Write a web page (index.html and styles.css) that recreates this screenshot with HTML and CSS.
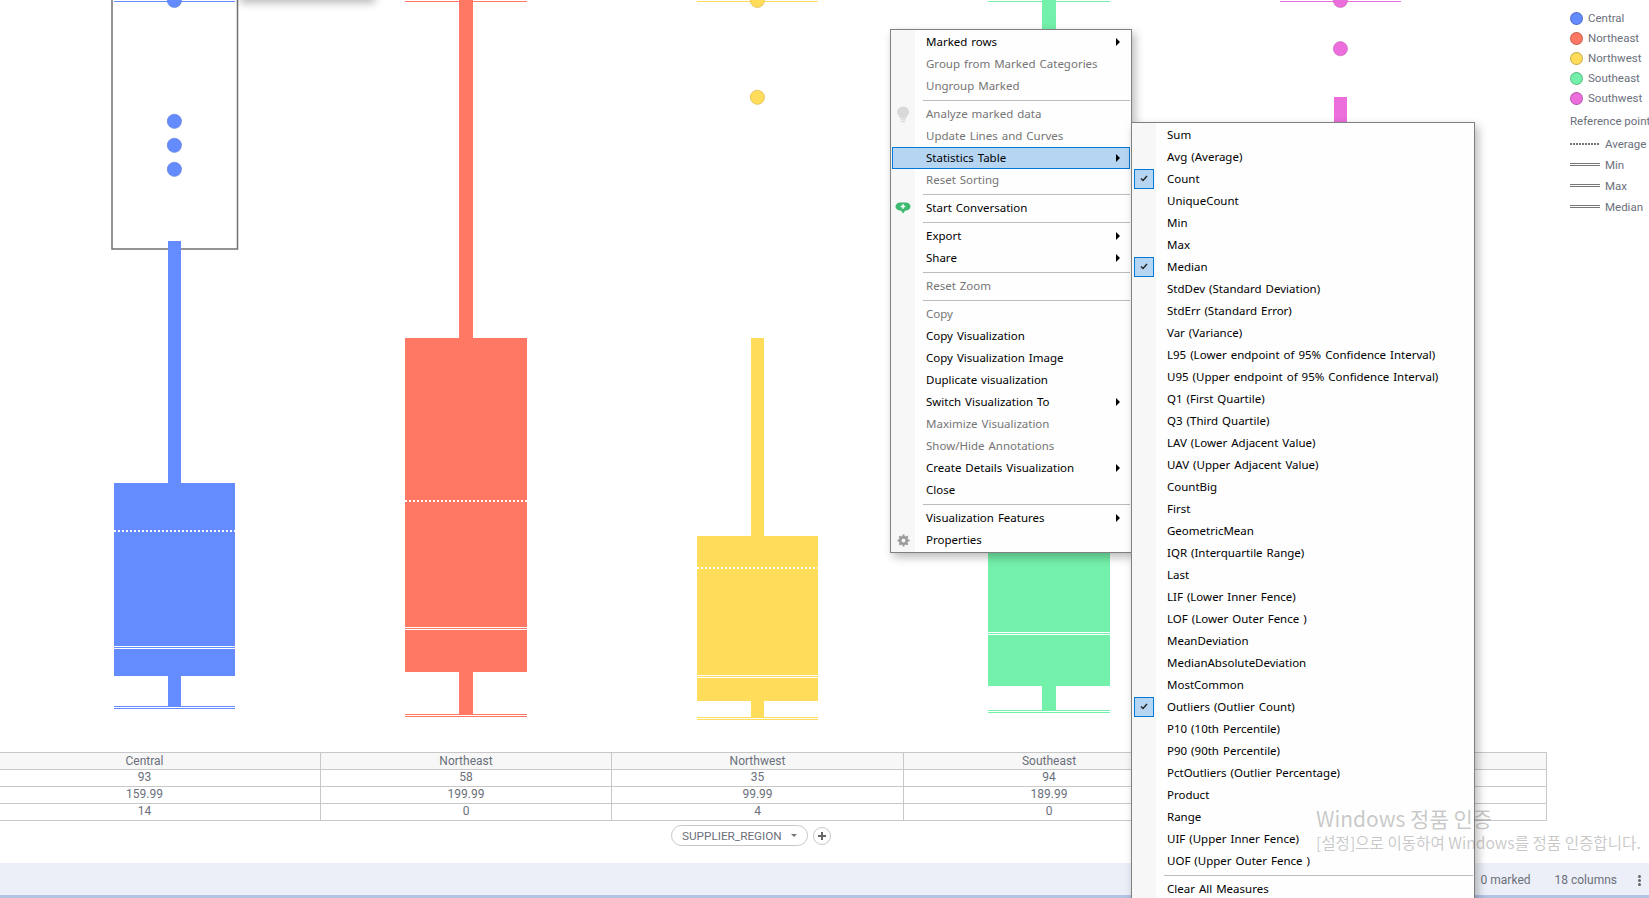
FILE: index.html
```html
<!DOCTYPE html>
<html lang="en">
<head>
<meta charset="utf-8">
<title>Box plot</title>
<link rel="stylesheet" href="styles.css">
</head>
<body>
<div class="page">
  <div class="top-shadow"></div>
  <div class="top">
    <svg class="chart" width="1570" height="752" viewBox="0 0 1570 752">
      <rect class="sel" x="112" y="-6" width="125.5" height="255"/>
      <g class="blue">
        <rect x="114" y="1" width="121" height="1"/>
        <circle cx="174.4" cy="0.4" r="7.1"/>
        <circle cx="174.4" cy="121.3" r="7.1"/>
        <circle cx="174.4" cy="145.3" r="7.1"/>
        <circle cx="174.4" cy="169.3" r="7.1"/>
        <rect x="168" y="241" width="13" height="242"/>
        <rect x="114" y="483" width="121" height="193"/>
        <rect x="168" y="676" width="13" height="30"/>
        <rect x="114" y="706" width="121" height="1"/>
        <rect x="114" y="708" width="121" height="1"/>
        <line class="avg" x1="114" y1="531" x2="235" y2="531"/>
        <rect class="med" x="114" y="646" width="121" height="1"/>
        <rect class="med" x="114" y="648" width="121" height="1"/>
      </g>
      <g class="red">
        <rect x="405" y="1" width="122" height="1"/>
        <rect x="459" y="0" width="14" height="338"/>
        <rect x="405" y="338" width="122" height="334"/>
        <rect x="459" y="672" width="14" height="42"/>
        <rect x="405" y="714" width="122" height="1"/>
        <rect x="405" y="716" width="122" height="1"/>
        <line class="avg" x1="405" y1="501" x2="527" y2="501"/>
        <rect class="med" x="405" y="627" width="122" height="1"/>
        <rect class="med" x="405" y="629" width="122" height="1"/>
      </g>
      <g class="yellow">
        <rect x="697" y="1" width="121" height="1"/>
        <circle cx="757.4" cy="0.4" r="7.1"/>
        <circle cx="757.4" cy="97.3" r="7.1"/>
        <rect x="751" y="338" width="13" height="198"/>
        <rect x="697" y="536" width="121" height="165"/>
        <rect x="751" y="701" width="13" height="16"/>
        <rect x="697" y="717" width="121" height="1"/>
        <rect x="697" y="719" width="121" height="1"/>
        <line class="avg" x1="697" y1="568" x2="818" y2="568"/>
        <rect class="med" x="697" y="675" width="121" height="1"/>
        <rect class="med" x="697" y="677" width="121" height="1"/>
      </g>
      <g class="green">
        <rect x="988" y="1" width="122" height="1"/>
        <rect x="1042" y="0" width="14" height="400"/>
        <rect x="988" y="400" width="122" height="286"/>
        <rect x="1042" y="686" width="14" height="24"/>
        <rect x="988" y="710" width="122" height="1"/>
        <rect x="988" y="712" width="122" height="1"/>
        <rect class="med" x="988" y="632" width="122" height="1"/>
        <rect class="med" x="988" y="634" width="122" height="1"/>
      </g>
      <g class="pink">
        <rect x="1280" y="1" width="121" height="1"/>
        <circle cx="1340.4" cy="0.4" r="7.1"/>
        <circle cx="1340.4" cy="48.7" r="7.1"/>
        <rect x="1334" y="97" width="13" height="60"/>
      </g>
    </svg>
    <div class="legend">
      <div class="lg-row"><span class="swatch s-blue"></span>Central</div>
      <div class="lg-row"><span class="swatch s-red"></span>Northeast</div>
      <div class="lg-row"><span class="swatch s-yellow"></span>Northwest</div>
      <div class="lg-row"><span class="swatch s-green"></span>Southeast</div>
      <div class="lg-row"><span class="swatch s-pink"></span>Southwest</div>
      <div class="lg-title">Reference points</div>
      <div class="lg-ref"><span class="dotted"></span>Average</div>
      <div class="lg-ref"><span class="double"></span>Min</div>
      <div class="lg-ref"><span class="double"></span>Max</div>
      <div class="lg-ref"><span class="double"></span>Median</div>
    </div>
  </div>

  <div class="stats">
    <div class="cell head first">Central</div><div class="cell head">Northeast</div><div class="cell head">Northwest</div><div class="cell head">Southeast</div><div class="cell head">Southwest</div>
    <div class="cell first">93</div><div class="cell">58</div><div class="cell">35</div><div class="cell">94</div><div class="cell">70</div>
    <div class="cell first">159.99</div><div class="cell">199.99</div><div class="cell">99.99</div><div class="cell">189.99</div><div class="cell">149.99</div>
    <div class="cell first">14</div><div class="cell">0</div><div class="cell">4</div><div class="cell">0</div><div class="cell">3</div>
  </div>

  <div class="axis">
    <div class="pill">SUPPLIER_REGION<span class="caret"></span></div>
    <div class="add"><svg width="10" height="10" viewBox="0 0 10 10"><path class="plus" d="M5 1v8M1 5h8"/></svg></div>
  </div>

  <div class="status">
    <span>0 marked</span>
    <span>18 columns</span>
    <span class="dots"><i></i><i></i><i></i></span>
  </div>

  <div class="menu menu-main">
    <div class="item"><span class="ic"></span><span class="label">Marked rows</span><span class="arrow"></span></div>
    <div class="item off"><span class="ic"></span><span class="label">Group from Marked Categories</span></div>
    <div class="item off"><span class="ic"></span><span class="label">Ungroup Marked</span></div>
    <div class="sep"></div>
    <div class="item off"><span class="ic"><svg width="14" height="17" viewBox="0 0 14 17"><path class="bulb" d="M7 0.5C3.6 0.5 1 3 1 6c0 2.2 1.4 3.5 2.4 4.8.5.7.6 1.2.6 1.7h6c0-.5.1-1 .6-1.7C11.600 9.500 13 8.200 13 6c0-3-2.600-5.500-6-5.500z"/><path class="bulb-base" d="M4.500 13.800h5M5 15.800h4"/></svg></span><span class="label">Analyze marked data</span></div>
    <div class="item off"><span class="ic"></span><span class="label">Update Lines and Curves</span></div>
    <div class="item hot"><span class="ic"></span><span class="label">Statistics Table</span><span class="arrow"></span></div>
    <div class="item off"><span class="ic"></span><span class="label">Reset Sorting</span></div>
    <div class="sep"></div>
    <div class="item"><span class="ic"><svg width="16" height="12" viewBox="0 0 16 12"><path class="chat" d="M5 0.500h6c2.500 0 4.500 1.800 4.500 4s-2 4-4.500 4h-.6L8 11.500 6 8.500H5C2.500 8.500.5 6.700.5 4.500S2.500.5 5 .5z"/><path class="chat-plus" d="M8 2.200v4.600M5.700 4.500h4.600"/></svg></span><span class="label">Start Conversation</span></div>
    <div class="sep"></div>
    <div class="item"><span class="ic"></span><span class="label">Export</span><span class="arrow"></span></div>
    <div class="item"><span class="ic"></span><span class="label">Share</span><span class="arrow"></span></div>
    <div class="sep"></div>
    <div class="item off"><span class="ic"></span><span class="label">Reset Zoom</span></div>
    <div class="sep"></div>
    <div class="item off"><span class="ic"></span><span class="label">Copy</span></div>
    <div class="item"><span class="ic"></span><span class="label">Copy Visualization</span></div>
    <div class="item"><span class="ic"></span><span class="label">Copy Visualization Image</span></div>
    <div class="item"><span class="ic"></span><span class="label">Duplicate visualization</span></div>
    <div class="item"><span class="ic"></span><span class="label">Switch Visualization To</span><span class="arrow"></span></div>
    <div class="item off"><span class="ic"></span><span class="label">Maximize Visualization</span></div>
    <div class="item off"><span class="ic"></span><span class="label">Show/Hide Annotations</span></div>
    <div class="item"><span class="ic"></span><span class="label">Create Details Visualization</span><span class="arrow"></span></div>
    <div class="item"><span class="ic"></span><span class="label">Close</span></div>
    <div class="sep"></div>
    <div class="item"><span class="ic"></span><span class="label">Visualization Features</span><span class="arrow"></span></div>
    <div class="item"><span class="ic"><svg width="13" height="13" viewBox="0 0 13 13"><circle class="gear-ring" cx="6.500" cy="6.500" r="3.300"/><path class="gear-teeth" d="M6.500 0.500v2.200M6.500 10.300v2.200M.5 6.500h2.200M10.300 6.500h2.200M2.300 2.300l1.500 1.500M9.200 9.200l1.500 1.500M10.700 2.300L9.200 3.800M3.800 9.200l-1.500 1.500"/></svg></span><span class="label">Properties</span></div>
  </div>

  <div class="menu menu-sub">
    <div class="item"><span class="ic"></span><span class="label">Sum</span></div>
    <div class="item"><span class="ic"></span><span class="label">Avg (Average)</span></div>
    <div class="item"><span class="ic"><span class="check"><svg width="8" height="7" viewBox="0 0 8 7"><path class="tick" d="M1 3.500L3 5.500 7 1"/></svg></span></span><span class="label">Count</span></div>
    <div class="item"><span class="ic"></span><span class="label">UniqueCount</span></div>
    <div class="item"><span class="ic"></span><span class="label">Min</span></div>
    <div class="item"><span class="ic"></span><span class="label">Max</span></div>
    <div class="item"><span class="ic"><span class="check"><svg width="8" height="7" viewBox="0 0 8 7"><path class="tick" d="M1 3.500L3 5.500 7 1"/></svg></span></span><span class="label">Median</span></div>
    <div class="item"><span class="ic"></span><span class="label">StdDev (Standard Deviation)</span></div>
    <div class="item"><span class="ic"></span><span class="label">StdErr (Standard Error)</span></div>
    <div class="item"><span class="ic"></span><span class="label">Var (Variance)</span></div>
    <div class="item"><span class="ic"></span><span class="label">L95 (Lower endpoint of 95% Confidence Interval)</span></div>
    <div class="item"><span class="ic"></span><span class="label">U95 (Upper endpoint of 95% Confidence Interval)</span></div>
    <div class="item"><span class="ic"></span><span class="label">Q1 (First Quartile)</span></div>
    <div class="item"><span class="ic"></span><span class="label">Q3 (Third Quartile)</span></div>
    <div class="item"><span class="ic"></span><span class="label">LAV (Lower Adjacent Value)</span></div>
    <div class="item"><span class="ic"></span><span class="label">UAV (Upper Adjacent Value)</span></div>
    <div class="item"><span class="ic"></span><span class="label">CountBig</span></div>
    <div class="item"><span class="ic"></span><span class="label">First</span></div>
    <div class="item"><span class="ic"></span><span class="label">GeometricMean</span></div>
    <div class="item"><span class="ic"></span><span class="label">IQR (Interquartile Range)</span></div>
    <div class="item"><span class="ic"></span><span class="label">Last</span></div>
    <div class="item"><span class="ic"></span><span class="label">LIF (Lower Inner Fence)</span></div>
    <div class="item"><span class="ic"></span><span class="label">LOF (Lower Outer Fence )</span></div>
    <div class="item"><span class="ic"></span><span class="label">MeanDeviation</span></div>
    <div class="item"><span class="ic"></span><span class="label">MedianAbsoluteDeviation</span></div>
    <div class="item"><span class="ic"></span><span class="label">MostCommon</span></div>
    <div class="item"><span class="ic"><span class="check"><svg width="8" height="7" viewBox="0 0 8 7"><path class="tick" d="M1 3.500L3 5.500 7 1"/></svg></span></span><span class="label">Outliers (Outlier Count)</span></div>
    <div class="item"><span class="ic"></span><span class="label">P10 (10th Percentile)</span></div>
    <div class="item"><span class="ic"></span><span class="label">P90 (90th Percentile)</span></div>
    <div class="item"><span class="ic"></span><span class="label">PctOutliers (Outlier Percentage)</span></div>
    <div class="item"><span class="ic"></span><span class="label">Product</span></div>
    <div class="item"><span class="ic"></span><span class="label">Range</span></div>
    <div class="item"><span class="ic"></span><span class="label">UIF (Upper Inner Fence)</span></div>
    <div class="item"><span class="ic"></span><span class="label">UOF (Upper Outer Fence )</span></div>
    <div class="sep"></div>
    <div class="item"><span class="ic"></span><span class="label">Clear All Measures</span></div>
  </div>

  <div class="watermark">
    <div class="wm-title">Windows 정품 인증</div>
    <div class="wm-sub">[설정]으로 이동하여 Windows를 정품 인증합니다.</div>
  </div>
</div>
</body>
</html>
```

FILE: styles.css
```css
* { box-sizing: border-box; }
html, body { margin: 0; padding: 0; background: #fff; }
.page {
  position: relative;
  width: 1649px;
  height: 898px;
  overflow: hidden;
  background: #fff;
  font-family: Roboto, "Noto Sans CJK KR", sans-serif;
  font-size: 12px;
  color: #6b6f7b;
  white-space: nowrap;
}
.top-shadow {
  position: absolute;
  left: 240px;
  top: -20px;
  width: 135px;
  height: 20px;
  box-shadow: 0 3px 9px rgba(0, 0, 0, .28);
}

/* chart */
.top { display: flex; height: 752px; }
.chart { display: block; flex: none; }
.sel { fill: none; stroke: #707070; stroke-width: 1.500; }
.blue rect, .blue circle { fill: #648cff; }
.red rect { fill: #ff7864; }
.yellow rect, .yellow circle { fill: #ffdc5a; }
.green rect { fill: #73f0aa; }
.pink rect, .pink circle { fill: #eb6edc; }
.blue circle { stroke: #5a78d2; stroke-width: .6; }
.yellow circle { stroke: #d2b44b; stroke-width: .6; }
.pink circle { stroke: #c45fb8; stroke-width: .6; }
.chart .med { fill: #fff; }
.avg { stroke: #fff; stroke-width: 2; stroke-dasharray: 2 2; }

/* legend */
.legend { width: 79px; flex: none; overflow: hidden; padding-top: 8px; font-size: 11.5px; }
.lg-row { display: flex; align-items: center; gap: 5px; height: 20px; }
.swatch { width: 13px; height: 13px; border-radius: 50%; border: 1px solid rgba(0, 0, 0, .22); }
.s-blue { background: #648cff; }
.s-red { background: #ff7864; }
.s-yellow { background: #ffdc5a; }
.s-green { background: #73f0aa; }
.s-pink { background: #eb6edc; }
.lg-title { height: 20px; line-height: 20px; margin: 3px 0 2px; }
.lg-ref { display: flex; align-items: center; gap: 5px; height: 21px; }
.dotted { width: 30px; height: 2px; background: repeating-linear-gradient(90deg, #777 0 2px, transparent 2px 3px); }
.double { width: 30px; height: 3px; border-top: 1px solid #777; border-bottom: 1px solid #777; }

/* statistics table */
.stats {
  display: grid;
  grid-template-columns: 321px 291px 292px 291px 352px;
  grid-auto-rows: 17px;
  width: 1547px;
  height: 69px;
  border-top: 1px solid #c8c8c8;
}
.cell {
  display: flex;
  align-items: center;
  justify-content: center;
  padding-bottom: 2px;
  border-bottom: 1px solid #c8c8c8;
  border-right: 1px solid #c8c8c8;
}
.head { background: #f7f7f7; padding-bottom: 0; }
.first { padding-right: 31px; }

/* axis selector */
.axis { display: flex; align-items: flex-start; gap: 5px; height: 42px; padding: 4px 0 0 671px; }
.pill {
  display: flex;
  align-items: center;
  width: 137px;
  height: 21px;
  padding-left: 10px;
  border: 1px solid #c8c8c8;
  border-radius: 11px;
  font-size: 11.75px;
}
.caret {
  margin-left: 9px;
  border-left: 3.500px solid transparent;
  border-right: 3.500px solid transparent;
  border-top: 3.500px solid #777;
}
.add {
  display: flex;
  align-items: center;
  justify-content: center;
  width: 18px;
  height: 18px;
  margin-top: 2px;
  border: 1px solid #c8c8c8;
  border-radius: 50%;
}
.plus { fill: none; stroke: #666; stroke-width: 2; }

/* status bar */
.status {
  display: flex;
  align-items: center;
  justify-content: flex-end;
  gap: 24px;
  height: 35px;
  padding: 2px 8px 0 0;
  background: #eceff7;
  border-bottom: 3px solid #b3c4e3;
}
.dots { display: flex; flex-direction: column; gap: 1px; margin-left: -3px; }
.dots i { display: block; width: 3px; height: 3px; border-radius: 50%; background: #666; }

/* context menus */
.menu {
  position: absolute;
  padding: 1px 0;
  background: linear-gradient(to right, #f7f7f7 24px, #fefefe 24px);
  border: 1px solid #808080;
  box-shadow: 3px 4px 9px rgba(0, 0, 0, .28);
  font-family: "Noto Sans", "Noto Sans CJK KR", sans-serif;
  font-size: 11.5px;
  word-spacing: 1px;
  color: #000;
}
.menu-main { left: 890px; top: 29px; width: 242px; height: 524px; }
.menu-sub { left: 1131px; top: 122px; width: 344px; height: 790px; }
.item {
  display: flex;
  align-items: center;
  height: 22px;
  margin: 0 1px;
  border: 1px solid transparent;
}
.item.hot { background: #b5d5f2; border-color: #0078d7; }
.item.off { color: #757575; }
.ic { display: flex; align-items: center; justify-content: center; flex: none; width: 20px; height: 20px; margin-right: 13px; }
.label { flex: 1; padding-bottom: 2px; }
.arrow {
  flex: none;
  margin-right: 9px;
  border-left: 4px solid #000;
  border-top: 4px solid transparent;
  border-bottom: 4px solid transparent;
}
.sep { height: 1px; margin: 3px 1px 2px 32px; background: #bcbcbc; }
.check {
  display: flex;
  justify-content: center;
  align-items: flex-start;
  padding-top: 5px;
  width: 20px;
  height: 20px;
  background: #b5d5f2;
  border: 1px solid #0078d7;
}
.tick { fill: none; stroke: #222; stroke-width: 1.400; }
.bulb { fill: #d9d9d9; }
.bulb-base { fill: none; stroke: #d0d0d0; stroke-width: 1; }
.chat { fill: #3dba6f; }
.chat-plus { fill: none; stroke: #fff; stroke-width: 1.500; }
.gear-ring { fill: none; stroke: #9a9a9a; stroke-width: 2.600; }
.gear-teeth { fill: none; stroke: #9a9a9a; stroke-width: 2; }

/* activation watermark */
.watermark {
  position: absolute;
  left: 1316px;
  top: 804px;
  font-family: "Noto Sans CJK KR", sans-serif;
  color: rgba(110, 110, 110, .38);
}
.wm-title { font-size: 21px; line-height: 28px; }
.wm-sub { font-size: 15.6px; line-height: 20px; }
```
